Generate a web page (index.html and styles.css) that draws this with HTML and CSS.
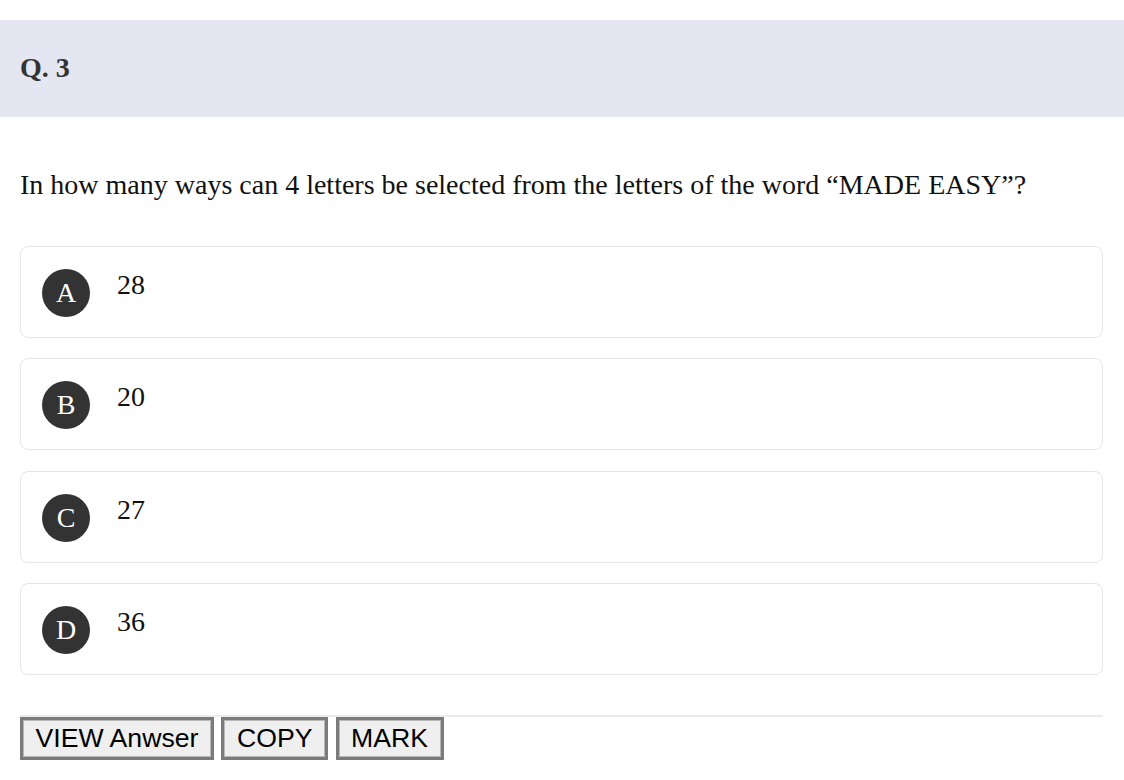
FILE: index.html
```html
<!DOCTYPE html>
<html>
<head>
<meta charset="utf-8">
<link rel="stylesheet" href="styles.css">
</head>
<body>
<div class="page">
  <div class="qhead"><h2 class="qnum">Q. 3</h2></div>
  <div class="content">
    <p class="question">In how many ways can 4 letters be selected from the letters of the word “MADE EASY”?</p>
    <div class="options">
      <div class="option"><span class="badge">A</span><span class="val">28</span></div>
      <div class="option"><span class="badge">B</span><span class="val">20</span></div>
      <div class="option"><span class="badge">C</span><span class="val">27</span></div>
      <div class="option"><span class="badge">D</span><span class="val">36</span></div>
    </div>
    <div class="actions">
      <button class="btn">VIEW Anwser</button>
      <button class="btn">COPY</button>
      <button class="btn">MARK</button>
    </div>
  </div>
</div>
</body>
</html>
```
FILE: styles.css
```css
html, body { margin: 0; padding: 0; background: #fff; }
body { font-family: "Liberation Serif", "Times New Roman", serif; color: #111; }
.page { padding-top: 20px; }
.qhead { background: #e4e6f1; height: 97px; display: flex; align-items: center; padding: 0 20px; }
.qnum { margin: 0; font-size: 28px; line-height: 32px; font-weight: bold; color: #333; padding-bottom: 1px; }
.content { padding: 0 21px 0 20px; }
.question { font-size: 28px; margin: 52px 0 0 0; line-height: 32px; color: #111; }
.options { display: flex; flex-direction: column; gap: 20.3px; margin-top: 45px; }
.option { border: 1px solid #e6e6e6; border-radius: 8px; box-sizing: border-box; height: 92px; padding: 22px 21px; display: flex; align-items: flex-start; gap: 27px; }
.badge { width: 48px; height: 48px; border-radius: 50%; background: #333; color: #fff; font-size: 28px; line-height: 32px; display: flex; align-items: center; justify-content: center; flex: none; }
.val { font-size: 28px; line-height: 32px; color: #111; }
.actions { margin-top: 40px; border-top: 2px solid #ececec; padding-top: 0; display: flex; gap: 7.5px; }
.btn { font-family: "Liberation Sans", Arial, sans-serif; font-size: 26.67px; color: #000; background: #efefef; border: 3px solid #7b7b7b; box-shadow: inset 0 0 0 1px #b8b8b8; padding: 3px 12.5px; line-height: normal; }
```
